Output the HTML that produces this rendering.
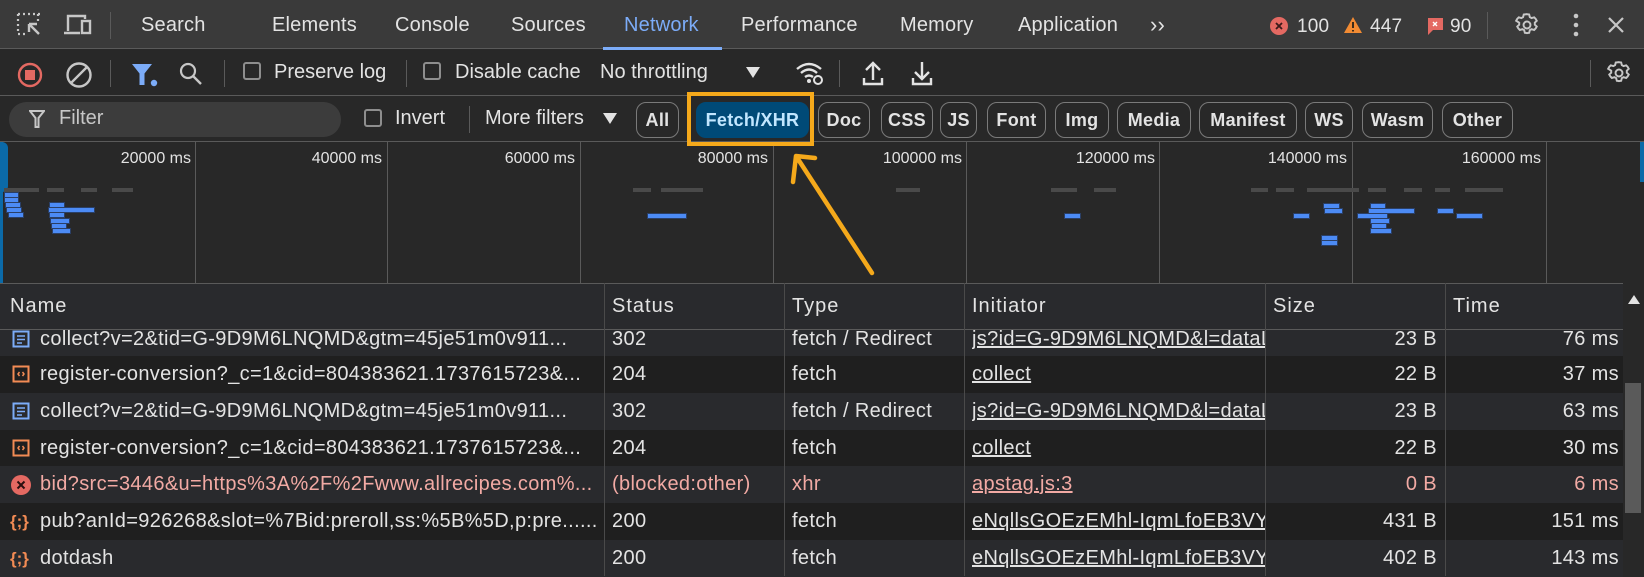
<!DOCTYPE html>
<html><head><meta charset="utf-8"><style>
*{box-sizing:border-box;margin:0;padding:0}
body{width:1644px;height:576px;overflow:hidden;background:#282828;font-family:"Liberation Sans",sans-serif;color:#e3e3e3;position:relative}
.a{position:absolute;white-space:nowrap}
.tab{position:absolute;top:14px;font-size:20px;color:#e3e3e3;letter-spacing:0.2px}
.sep{position:absolute;width:1px;background:#5a5a5a}
.t{font-size:20px;position:absolute}
.chip{position:absolute;top:102px;height:36px;border:1px solid #7a7a7a;border-radius:10px;font-size:18px;font-weight:bold;text-align:center;line-height:34px;color:#e3e3e3;letter-spacing:0.3px}
.cb{position:absolute;width:18px;height:18px;border:2px solid #8e8e8e;border-radius:3px}
.tl{position:absolute;top:150px;font-size:16px;color:#e3e3e3;text-align:right;width:120px}
.vl{position:absolute;top:142px;height:141px;width:1px;background:#5a5a5a}
.g{position:absolute;height:4px;background:#4a4a4a}
.b{position:absolute;height:6px;background:#4c8bf5;border:1px solid #2a3f66}
.row{position:absolute;left:0;width:1623px;height:37px;font-size:20px;letter-spacing:0.35px}
.row div{position:absolute;top:0;line-height:37px;overflow:hidden;white-space:nowrap}
.c1{left:40px;width:560px}
.c2{left:612px}.c3{left:792px}
.c4{left:972px;width:293px;text-decoration:underline}
.c5{left:1265px;width:172px;text-align:right}
.c6{left:1445px;width:174px;text-align:right}
.ic{position:absolute;left:12px;top:9px}
.cl{position:absolute;top:283px;height:293px;width:1px;background:#4a4a4a}
.err div{color:#f2aaa4}
.h{position:absolute;top:295px;font-size:20px;letter-spacing:1px}
</style></head><body>
<div class="a" style="left:0;top:0;width:1644px;height:49px;background:#3a3a3a;border-bottom:1px solid #5a5a5a"></div>
<svg class="a" style="left:16px;top:12px" width="28" height="26" viewBox="0 0 28 26"><path d="M2 2h2M7 2h2M12 2h2M17 2h2M22 2h2M2 2v2M2 7v2M2 12v2M2 17v2M2 22h2M7 22h2M22 2v2M22 7v2" stroke="#c7c7c7" stroke-width="2.2" fill="none"/><path d="M13 12l10 10M13 12v8M13 12h8" stroke="#c7c7c7" stroke-width="2.4" fill="none"/></svg>
<svg class="a" style="left:63px;top:13px" width="32" height="24" viewBox="0 0 32 24"><path d="M5 18V3h17v3M1 20h16" stroke="#c7c7c7" stroke-width="2.4" fill="none"/><rect x="19" y="8" width="8" height="12" stroke="#c7c7c7" stroke-width="2.4" fill="none"/></svg>
<div class="sep" style="left:110px;top:12px;height:27px"></div>
<div class="tab" style="left:141px">Search</div>
<div class="tab" style="left:272px">Elements</div>
<div class="tab" style="left:395px">Console</div>
<div class="tab" style="left:511px">Sources</div>
<div class="tab" style="left:624px;color:#7cacf8">Network</div>
<div class="a" style="left:603px;top:47px;width:119px;height:3px;background:#7cacf8"></div>
<div class="tab" style="left:741px">Performance</div>
<div class="tab" style="left:900px">Memory</div>
<div class="tab" style="left:1018px">Application</div>
<div class="tab" style="left:1150px;font-size:22px;top:12px">&#8250;&#8250;</div>
<svg class="a" style="left:1270px;top:17px" width="18" height="18"><circle cx="9" cy="9" r="9" fill="#e46962"/><path d="M6 6l6 6M12 6l-6 6" stroke="#3a1a1a" stroke-width="1.8"/></svg>
<div class="tab" style="left:1297px;font-size:19px;top:16px">100</div>
<svg class="a" style="left:1343px;top:16px" width="20" height="18"><path d="M10 1L19 17H1z" fill="#f28b33"/><path d="M10 6v6M10 14v1.5" stroke="#3a2a1a" stroke-width="2"/></svg>
<div class="tab" style="left:1370px;font-size:19px;top:16px">447</div>
<svg class="a" style="left:1427px;top:17px" width="17" height="18"><path d="M1 1h15v12H6l-5 5z" fill="#e46962"/><path d="M6 5l4 4M10 5l-4 4" stroke="#fff" stroke-width="1.4"/></svg>
<div class="tab" style="left:1450px;font-size:19px;top:16px">90</div>
<div class="sep" style="left:1487px;top:12px;height:27px"></div>
<svg class="a" style="left:1514px;top:12px" width="26" height="26" viewBox="0 0 24 24"><path d="M12 2l2 .3.6 2.4 1.6.9 2.4-.7 1.4 1.4 1 1.8-1.8 1.7v1.9l1.8 1.7-1 1.8-1.4 1.4-2.4-.7-1.6.9-.6 2.4-2 .3-2-.3-.6-2.4-1.6-.9-2.4.7-1.4-1.4-1-1.8 1.8-1.7v-1.9L2 8.1l1-1.8 1.4-1.4 2.4.7 1.6-.9L9 2.3z" stroke="#c7c7c7" stroke-width="1.8" fill="none"/><circle cx="12" cy="12" r="3.2" stroke="#c7c7c7" stroke-width="1.8" fill="none"/></svg>
<svg class="a" style="left:1572px;top:13px" width="8" height="24"><circle cx="4" cy="3" r="2.3" fill="#c7c7c7"/><circle cx="4" cy="12" r="2.3" fill="#c7c7c7"/><circle cx="4" cy="21" r="2.3" fill="#c7c7c7"/></svg>
<svg class="a" style="left:1607px;top:16px" width="18" height="18"><path d="M2 2l14 14M16 2L2 16" stroke="#c7c7c7" stroke-width="2.2"/></svg>

<div class="a" style="left:0;top:95px;width:1644px;height:1px;background:#5a5a5a"></div>
<svg class="a" style="left:17px;top:62px" width="26" height="26"><circle cx="13" cy="13" r="11" stroke="#e46962" stroke-width="2.4" fill="none"/><rect x="8" y="8" width="10" height="10" fill="#e46962"/></svg>
<svg class="a" style="left:65px;top:61px" width="28" height="28"><circle cx="14" cy="14" r="11.5" stroke="#c7c7c7" stroke-width="2.4" fill="none"/><path d="M6 22L22 6" stroke="#c7c7c7" stroke-width="2.4"/></svg>
<div class="sep" style="left:110px;top:60px;height:27px"></div>
<svg class="a" style="left:131px;top:63px" width="28" height="24"><path d="M1 1h20l-7.5 9.5V22h-5V10.5z" fill="#7cacf8"/><circle cx="23" cy="20" r="3.2" fill="#7cacf8"/></svg>
<svg class="a" style="left:178px;top:61px" width="26" height="26"><circle cx="10" cy="10" r="7" stroke="#c7c7c7" stroke-width="2.2" fill="none"/><path d="M15 15l8 8" stroke="#c7c7c7" stroke-width="2.4"/></svg>
<div class="sep" style="left:224px;top:60px;height:27px"></div>
<div class="cb" style="left:243px;top:62px"></div>
<div class="t" style="left:274px;top:61px">Preserve log</div>
<div class="sep" style="left:406px;top:60px;height:27px"></div>
<div class="cb" style="left:423px;top:62px"></div>
<div class="t" style="left:455px;top:61px">Disable cache</div>
<div class="t" style="left:600px;top:61px">No throttling</div>
<svg class="a" style="left:746px;top:67px" width="14" height="11"><path d="M0 0h14L7 11z" fill="#e3e3e3"/></svg>
<svg class="a" style="left:795px;top:60px" width="30" height="26" viewBox="0 0 30 26"><path d="M2 9Q14 -1 26 9M6 13Q14 6 22 13M10 17Q14 14 18 17" stroke="#e3e3e3" stroke-width="2.4" fill="none"/><circle cx="14" cy="21" r="2" fill="#e3e3e3"/><circle cx="23" cy="20" r="4" stroke="#e3e3e3" stroke-width="2" fill="#282828"/></svg>
<div class="sep" style="left:839px;top:60px;height:27px"></div>
<svg class="a" style="left:862px;top:60px" width="22" height="26"><path d="M11 20V3M4 10l7-7 7 7M2 18v6h18v-6" stroke="#e3e3e3" stroke-width="2.4" fill="none"/></svg>
<svg class="a" style="left:911px;top:60px" width="22" height="26"><path d="M11 2v17M4 12l7 7 7-7M2 18v6h18v-6" stroke="#e3e3e3" stroke-width="2.4" fill="none"/></svg>
<div class="sep" style="left:1590px;top:60px;height:27px"></div>
<svg class="a" style="left:1606px;top:60px" width="26" height="26" viewBox="0 0 24 24"><path d="M12 2l2 .3.6 2.4 1.6.9 2.4-.7 1.4 1.4 1 1.8-1.8 1.7v1.9l1.8 1.7-1 1.8-1.4 1.4-2.4-.7-1.6.9-.6 2.4-2 .3-2-.3-.6-2.4-1.6-.9-2.4.7-1.4-1.4-1-1.8 1.8-1.7v-1.9L2 8.1l1-1.8 1.4-1.4 2.4.7 1.6-.9L9 2.3z" stroke="#c7c7c7" stroke-width="1.8" fill="none"/><circle cx="12" cy="12" r="3.2" stroke="#c7c7c7" stroke-width="1.8" fill="none"/></svg>

<div class="a" style="left:0;top:141px;width:1644px;height:1px;background:#5a5a5a"></div>
<div class="a" style="left:9px;top:102px;width:332px;height:35px;border-radius:18px;background:#3c3c3c"></div>
<svg class="a" style="left:29px;top:110px" width="16" height="18"><path d="M1 1h14l-5.5 7v9h-3v-9z" stroke="#c7c7c7" stroke-width="2" fill="none"/></svg>
<div class="t" style="left:59px;top:107px;color:#c7c7c7">Filter</div>
<div class="cb" style="left:364px;top:109px"></div>
<div class="t" style="left:395px;top:107px">Invert</div>
<div class="sep" style="left:469px;top:106px;height:27px"></div>
<div class="t" style="left:485px;top:107px">More filters</div>
<svg class="a" style="left:603px;top:113px" width="14" height="11"><path d="M0 0h14L7 11z" fill="#e3e3e3"/></svg>
<div class="chip" style="left:636px;width:43px">All</div>
<div class="chip" style="left:696px;width:113px;background:#004a77;border-color:#004a77;color:#c2e7ff">Fetch/XHR</div>
<div class="chip" style="left:818px;width:52px">Doc</div>
<div class="chip" style="left:881px;width:52px">CSS</div>
<div class="chip" style="left:940px;width:37px">JS</div>
<div class="chip" style="left:987px;width:59px">Font</div>
<div class="chip" style="left:1055px;width:54px">Img</div>
<div class="chip" style="left:1117px;width:74px">Media</div>
<div class="chip" style="left:1199px;width:98px">Manifest</div>
<div class="chip" style="left:1305px;width:48px">WS</div>
<div class="chip" style="left:1362px;width:71px">Wasm</div>
<div class="chip" style="left:1442px;width:71px">Other</div>

<div class="a" style="left:0;top:142px;width:8px;height:50px;background:#0b6aa8;border-radius:0 6px 6px 0"></div>
<div class="a" style="left:0;top:142px;width:3px;height:141px;background:#0b6aa8"></div>
<div class="vl" style="left:195px"></div><div class="vl" style="left:387px"></div><div class="vl" style="left:580px"></div><div class="vl" style="left:773px"></div><div class="vl" style="left:966px"></div><div class="vl" style="left:1159px"></div><div class="vl" style="left:1352px"></div><div class="vl" style="left:1546px"></div>
<div class="tl" style="left:71px">20000 ms</div><div class="tl" style="left:262px">40000 ms</div><div class="tl" style="left:455px">60000 ms</div><div class="tl" style="left:648px">80000 ms</div><div class="tl" style="left:842px">100000 ms</div><div class="tl" style="left:1035px">120000 ms</div><div class="tl" style="left:1227px">140000 ms</div><div class="tl" style="left:1421px">160000 ms</div>
<div class="a" style="left:1640px;top:142px;width:4px;height:40px;background:#0b6aa8"></div>
<div class="g" style="left:4px;top:188px;width:35px"></div><div class="g" style="left:47px;top:188px;width:17px"></div><div class="g" style="left:81px;top:188px;width:16px"></div><div class="g" style="left:112px;top:188px;width:21px"></div>
<div class="b" style="left:4px;top:192px;width:15px"></div><div class="b" style="left:4px;top:197px;width:15px"></div><div class="b" style="left:5px;top:202px;width:16px"></div><div class="b" style="left:6px;top:207px;width:16px"></div><div class="b" style="left:8px;top:212px;width:16px"></div>
<div class="b" style="left:49px;top:202px;width:16px"></div><div class="b" style="left:48px;top:207px;width:47px"></div><div class="b" style="left:49px;top:212px;width:16px"></div><div class="b" style="left:50px;top:218px;width:20px"></div><div class="b" style="left:51px;top:223px;width:16px"></div><div class="b" style="left:52px;top:228px;width:19px"></div>
<div class="g" style="left:633px;top:188px;width:18px"></div><div class="g" style="left:661px;top:188px;width:42px"></div>
<div class="b" style="left:647px;top:213px;width:40px"></div>
<div class="g" style="left:896px;top:188px;width:24px"></div>
<div class="g" style="left:1051px;top:188px;width:26px"></div><div class="g" style="left:1094px;top:188px;width:22px"></div>
<div class="b" style="left:1064px;top:213px;width:17px"></div>
<div class="g" style="left:1251px;top:188px;width:17px"></div><div class="g" style="left:1276px;top:188px;width:18px"></div><div class="g" style="left:1307px;top:188px;width:52px"></div><div class="g" style="left:1368px;top:188px;width:18px"></div><div class="g" style="left:1404px;top:188px;width:18px"></div><div class="g" style="left:1435px;top:188px;width:15px"></div><div class="g" style="left:1465px;top:188px;width:38px"></div>
<div class="b" style="left:1323px;top:203px;width:17px"></div><div class="b" style="left:1370px;top:203px;width:16px"></div>
<div class="b" style="left:1324px;top:208px;width:19px"></div><div class="b" style="left:1368px;top:208px;width:47px"></div><div class="b" style="left:1437px;top:208px;width:17px"></div>
<div class="b" style="left:1293px;top:213px;width:17px"></div><div class="b" style="left:1357px;top:213px;width:31px"></div><div class="b" style="left:1456px;top:213px;width:27px"></div>
<div class="b" style="left:1370px;top:218px;width:20px"></div><div class="b" style="left:1371px;top:223px;width:16px"></div><div class="b" style="left:1370px;top:228px;width:22px"></div>
<div class="b" style="left:1321px;top:235px;width:17px"></div><div class="b" style="left:1321px;top:240px;width:17px"></div>

<div class="a" style="left:0;top:283px;width:1644px;height:293px;background:#282828"></div>
<div class="row" style="top:321px;background:#292a2d;height:35px"><svg class="ic" width="18" height="18" style="top:9px"><rect x="1.5" y="1.5" width="15" height="15" stroke="#7cacf8" stroke-width="2" fill="none"/><path d="M5 6h8M5 9.5h8M5 13h5" stroke="#7cacf8" stroke-width="1.6"/></svg><div class="c1" style="line-height:36px">collect?v=2&amp;tid=G-9D9M6LNQMD&amp;gtm=45je51m0v911...</div><div class="c2" style="line-height:36px">302</div><div class="c3" style="line-height:36px">fetch / Redirect</div><div class="c4" style="line-height:36px">js?id=G-9D9M6LNQMD&amp;l=dataLayer</div><div class="c5" style="line-height:36px">23 B</div><div class="c6" style="line-height:36px">76 ms</div></div>
<div class="a" style="left:0;top:283px;width:1623px;height:47px;background:#292a2d;border-top:1px solid #5a5a5a;border-bottom:1px solid #5a5a5a"></div>
<div class="h" style="left:10px">Name</div>
<div class="h" style="left:612px">Status</div>
<div class="h" style="left:792px">Type</div>
<div class="h" style="left:972px">Initiator</div>
<div class="h" style="left:1273px">Size</div>
<div class="h" style="left:1453px">Time</div>
<div class="row" style="top:356px;background:#1f1f1f"><svg class="ic" width="18" height="18"><rect x="1.5" y="1.5" width="15" height="15" stroke="#f28b54" stroke-width="2" fill="none"/><path d="M7.5 7L6 9l1.5 2M10.5 7L12 9l-1.5 2" stroke="#f28b54" stroke-width="1.5" fill="none"/></svg><div class="c1">register-conversion?_c=1&amp;cid=804383621.1737615723&amp;...</div><div class="c2">204</div><div class="c3">fetch</div><div class="c4">collect</div><div class="c5">22 B</div><div class="c6">37 ms</div></div>
<div class="row" style="top:393px;background:#292a2d"><svg class="ic" width="18" height="18"><rect x="1.5" y="1.5" width="15" height="15" stroke="#7cacf8" stroke-width="2" fill="none"/><path d="M5 6h8M5 9.5h8M5 13h5" stroke="#7cacf8" stroke-width="1.6"/></svg><div class="c1">collect?v=2&amp;tid=G-9D9M6LNQMD&amp;gtm=45je51m0v911...</div><div class="c2">302</div><div class="c3">fetch / Redirect</div><div class="c4">js?id=G-9D9M6LNQMD&amp;l=dataLayer</div><div class="c5">23 B</div><div class="c6">63 ms</div></div>
<div class="row" style="top:430px;background:#1f1f1f"><svg class="ic" width="18" height="18"><rect x="1.5" y="1.5" width="15" height="15" stroke="#f28b54" stroke-width="2" fill="none"/><path d="M7.5 7L6 9l1.5 2M10.5 7L12 9l-1.5 2" stroke="#f28b54" stroke-width="1.5" fill="none"/></svg><div class="c1">register-conversion?_c=1&amp;cid=804383621.1737615723&amp;...</div><div class="c2">204</div><div class="c3">fetch</div><div class="c4">collect</div><div class="c5">22 B</div><div class="c6">30 ms</div></div>
<div class="row err" style="top:466px;background:#292a2d"><svg class="ic" width="20" height="20" style="left:11px"><circle cx="10" cy="10" r="10" fill="#e46962"/><path d="M6.5 6.5l7 7M13.5 6.5l-7 7" stroke="#2a1010" stroke-width="2"/></svg><div class="c1">bid?src=3446&amp;u=https%3A%2F%2Fwww.allrecipes.com%...</div><div class="c2">(blocked:other)</div><div class="c3">xhr</div><div class="c4">apstag.js:3</div><div class="c5">0 B</div><div class="c6">6 ms</div></div>
<div class="row" style="top:503px;background:#1f1f1f"><div style="left:10px;color:#f28b54;font-weight:bold;font-size:17px;letter-spacing:0">{;}</div><div class="c1">pub?anId=926268&amp;slot=%7Bid:preroll,ss:%5B%5D,p:pre......</div><div class="c2">200</div><div class="c3">fetch</div><div class="c4">eNqllsGOEzEMhl-IqmLfoEB3VYrn</div><div class="c5">431 B</div><div class="c6">151 ms</div></div>
<div class="row" style="top:540px;background:#292a2d"><div style="left:10px;color:#f28b54;font-weight:bold;font-size:17px;letter-spacing:0">{;}</div><div class="c1">dotdash</div><div class="c2">200</div><div class="c3">fetch</div><div class="c4">eNqllsGOEzEMhl-IqmLfoEB3VYrn</div><div class="c5">402 B</div><div class="c6">143 ms</div></div>

<div class="cl" style="left:604px"></div><div class="cl" style="left:784px"></div><div class="cl" style="left:964px"></div><div class="cl" style="left:1265px"></div><div class="cl" style="left:1445px"></div>
<div class="a" style="left:1623px;top:283px;width:21px;height:293px;background:#282828"></div>
<svg class="a" style="left:1628px;top:295px" width="12" height="9"><path d="M0 9h12L6 0z" fill="#e3e3e3"/></svg>
<div class="a" style="left:1625px;top:383px;width:16px;height:130px;background:#5a5a5a"></div>

<div class="a" style="left:687px;top:92px;width:127px;height:54px;border:4px solid #f5a91b"></div>
<svg class="a" style="left:0;top:0" width="1644" height="576"><path d="M872 273L796 156M796 156l19 2M796 156l-3 26" stroke="#f5a91b" stroke-width="4.5" fill="none" stroke-linecap="round"/></svg>
</body></html>
